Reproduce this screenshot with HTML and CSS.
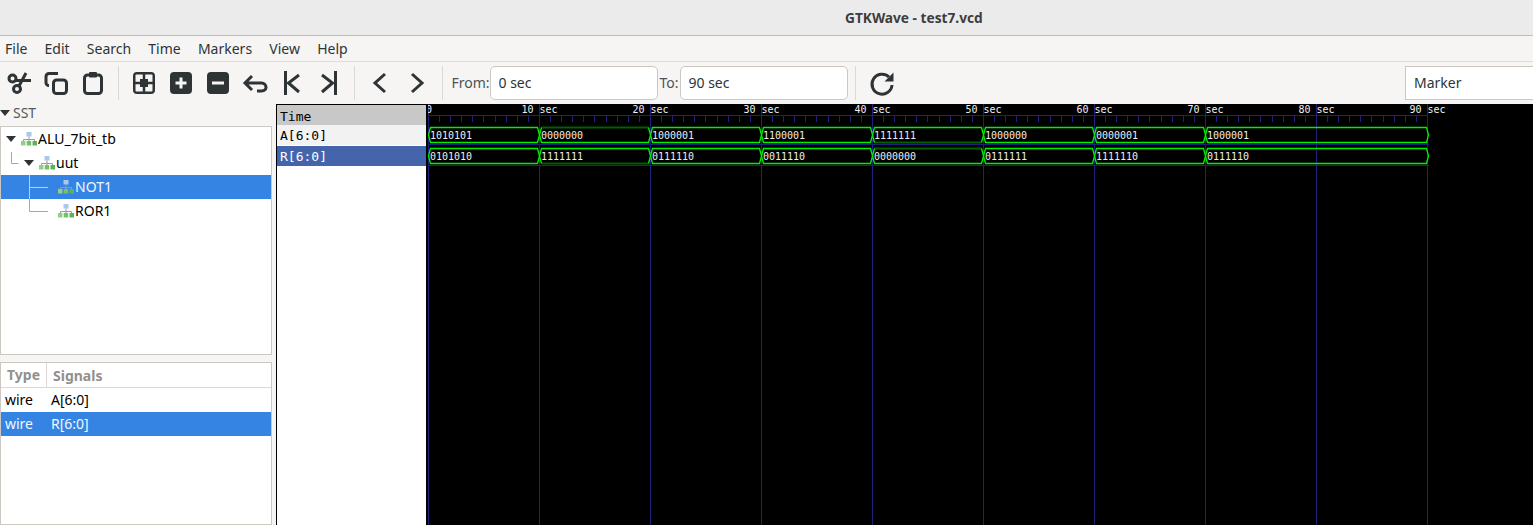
FILE: index.html
```html
<!DOCTYPE html>
<html lang="en">
<head>
    <meta charset="UTF-8">
    <title>GTKWave - test7.vcd</title>
    <link rel="stylesheet" href="styles.css">
</head>
<body>
    <svg class="defs" width="0" height="0">
        <symbol id="hier" viewBox="0 0 16 14">
            <rect x="5.5" y="0" width="5" height="4.5" fill="#a9c8ee"/>
            <path d="M8 4.5V7M2.5 7.5H13.5M2.5 7.5V9M8 7.5V9M13.5 7.5V9" stroke="#9a9a9a" fill="none"/>
            <rect x="0" y="9" width="4.5" height="4.5" fill="#8fcf86"/>
            <rect x="5.7" y="9" width="4.5" height="4.5" fill="#73c26a"/>
            <rect x="11.5" y="9" width="4.5" height="4.5" fill="#5cb552"/>
        </symbol>
    </svg>

    <header class="titlebar">GTKWave - test7.vcd</header>

    <nav class="menubar">
        <span>File</span><span>Edit</span><span>Search</span><span>Time</span><span>Markers</span><span>View</span><span>Help</span>
    </nav>

    <div class="toolbar">
        <button class="tool"><svg viewBox="0 0 24 24"><circle cx="5.5" cy="7.5" r="3.5"/><circle cx="10" cy="18" r="3.5"/><path d="M8.5 9.5H24M12 15L19 2"/></svg></button>
        <button class="tool"><svg viewBox="0 0 24 24"><rect x="9.5" y="9" width="13" height="13.5" rx="3"/><path d="M14 2.5H5A3 3 0 0 0 2 5.500V11A3 3 0 0 0 5 14.500"/></svg></button>
        <button class="tool"><svg viewBox="0 0 24 24"><rect x="3.500" y="4" width="17" height="18.500" rx="3"/><rect class="solid" x="8" y="1" width="8" height="5.500" rx="1"/></svg></button>
        <span class="sep"></span>
        <button class="tool"><svg viewBox="0 0 24 24"><rect class="solid" x="1" y="1" width="22" height="22" rx="4"/><rect class="hole" x="3.500" y="3.500" width="17" height="17" rx="1"/><rect class="solid" x="8" y="8" width="8" height="8"/><path class="arm" d="M12 3V21M3 12H21"/></svg></button>
        <button class="tool"><svg viewBox="0 0 24 24"><rect class="solid" x="1" y="1" width="22" height="22" rx="4"/><path class="cut" d="M12 6.500V17.500M6.500 12H17.500"/></svg></button>
        <button class="tool"><svg viewBox="0 0 24 24"><rect class="solid" x="1" y="1" width="22" height="22" rx="4"/><path class="cut" d="M6 12H18"/></svg></button>
        <button class="tool"><svg viewBox="0 0 24 24"><path d="M9 5L2 12L9 19M2 12H18.500C24 12 25 20 18.500 20H14"/></svg></button>
        <button class="tool"><svg viewBox="0 0 24 24"><path d="M5.500 0V24M19 4L8.500 12L19 21"/></svg></button>
        <button class="tool"><svg viewBox="0 0 24 24"><path d="M18.500 0V24M5 4L15.500 12L5 21"/></svg></button>
        <span class="sep"></span>
        <button class="tool"><svg viewBox="0 0 24 24"><path d="M17 3L7 12L17 21"/></svg></button>
        <button class="tool"><svg viewBox="0 0 24 24"><path d="M7 3L17 12L7 21"/></svg></button>
        <span class="sep"></span>
        <label class="range-label from">From:</label>
        <input class="range" type="text" value="0 sec">
        <label class="range-label to">To:</label>
        <input class="range" type="text" value="90 sec">
        <span class="sep wide"></span>
        <button class="tool"><svg viewBox="0 0 24 24"><path d="M19 6A10 10 0 1 0 22 14"/><path class="solid" d="M23.500 1.500V10.500H14.500Z"/></svg></button>
        <input class="marker" type="text" value="Marker">
    </div>

    <main class="content">
        <aside class="sidebar">
            <div class="sst-title"><span class="arrow"></span>SST</div>
            <div class="frame tree">
                <div class="row">
                    <span class="level0"></span><span class="arrow"></span>
                    <svg class="hier"><use href="#hier"/></svg><span class="label">ALU_7bit_tb</span>
                </div>
                <div class="row">
                    <svg class="lines w24"><path d="M10.500 1V12.500H17.500"/></svg><span class="arrow"></span>
                    <svg class="hier"><use href="#hier"/></svg><span class="label">uut</span>
                </div>
                <div class="row selected">
                    <svg class="lines w57"><path d="M28.500 0V24M28.500 12.500H47"/></svg>
                    <svg class="hier"><use href="#hier"/></svg><span class="label">NOT1</span>
                </div>
                <div class="row">
                    <svg class="lines w57"><path d="M28.500 0V12.500H47"/></svg>
                    <svg class="hier"><use href="#hier"/></svg><span class="label">ROR1</span>
                </div>
            </div>
            <div class="frame signals">
                <div class="signals-head"><span class="col-type">Type</span><span class="col-name">Signals</span></div>
                <div class="sig-row"><span class="cell-type">wire</span><span>A[6:0]</span></div>
                <div class="sig-row selected"><span class="cell-type">wire</span><span>R[6:0]</span></div>
            </div>
        </aside>

        <section class="wave">
            <div class="names">
                <div class="name name-time">Time</div>
                <div class="name name-a">A[6:0]</div>
                <div class="name name-r">R[6:0]</div>
            </div>
            <svg class="canvas" width="1105" height="421">
                <defs>
                    <pattern id="ticks" x="0" y="0" width="111" height="7" patternUnits="userSpaceOnUse">
                        <path d="M11.500 0V7M22.500 0V7M33.500 0V7M44.500 0V7M55.500 0V7M67.500 0V7M78.500 0V7M89.500 0V7M100.500 0V7" stroke="#20207c"/>
                    </pattern>
                    <path id="seg" d="M0.500 8L2.500 0.500H109.500L111.500 8L109.500 15.500H2.500Z"/>
                    <path id="seg-side" d="M2.500 15.500L0.500 8L2.500 0.500H109.500L111.500 8L109.500 15.500"/>
                    <path id="seg-open" d="M2.500 0.500L0.500 8L2.500 15.500H109.500L111.500 8L109.500 0.500"/>
                </defs>

                <rect x="0" y="11" width="999" height="7" fill="url(#ticks)"/>
                <path class="grid" d="M0 11.500H1000M0 40.500H1001M0 61.500H1001"/>
                <path class="grid" d="M0.500 0V421M111.500 0V421M222.500 0V421M333.500 0V421M444.500 0V421M555.500 0V421M666.500 0V421M777.500 0V421M888.500 0V421M999.500 0V421"/>

                <g class="ruler">
                    <text x="-2" y="9">0</text>
                    <text x="93.500" y="9">10 sec</text>
                    <text x="204.500" y="9">20 sec</text>
                    <text x="315.500" y="9">30 sec</text>
                    <text x="426.500" y="9">40 sec</text>
                    <text x="537.500" y="9">50 sec</text>
                    <text x="648.500" y="9">60 sec</text>
                    <text x="759.500" y="9">70 sec</text>
                    <text x="870.500" y="9">80 sec</text>
                    <text x="981.500" y="9">90 sec</text>
                </g>

                <g class="trace" transform="translate(0 23)">
                    <use href="#seg"/>
                    <path class="dim" d="M113.500 0.500H220.500"/><use href="#seg-open" x="111"/>
                    <use href="#seg" x="222"/>
                    <use href="#seg" x="333"/>
                    <path class="dim" d="M446.500 15.500H553.500"/><use href="#seg-side" x="444"/>
                    <use href="#seg" x="555"/>
                    <use href="#seg" x="666"/>
                    <path d="M777.500 8L779.500 0.500H998.500L1000.500 8L998.500 15.500H779.500Z"/>
                </g>
                <g class="trace" transform="translate(0 44)">
                    <use href="#seg"/>
                    <path class="dim" d="M113.500 15.500H220.500"/><use href="#seg-side" x="111"/>
                    <use href="#seg" x="222"/>
                    <use href="#seg" x="333"/>
                    <path class="dim" d="M446.500 0.500H553.500"/><use href="#seg-open" x="444"/>
                    <use href="#seg" x="555"/>
                    <use href="#seg" x="666"/>
                    <path d="M777.500 8L779.500 0.500H998.500L1000.500 8L998.500 15.500H779.500Z"/>
                </g>

                <g class="values">
                    <text x="2" y="35">1010101</text>
                    <text x="113" y="35">0000000</text>
                    <text x="224" y="35">1000001</text>
                    <text x="335" y="35">1100001</text>
                    <text x="446" y="35">1111111</text>
                    <text x="557" y="35">1000000</text>
                    <text x="668" y="35">0000001</text>
                    <text x="779" y="35">1000001</text>
                    <text x="2" y="56">0101010</text>
                    <text x="113" y="56">1111111</text>
                    <text x="224" y="56">0111110</text>
                    <text x="335" y="56">0011110</text>
                    <text x="446" y="56">0000000</text>
                    <text x="557" y="56">0111111</text>
                    <text x="668" y="56">1111110</text>
                    <text x="779" y="56">0111110</text>
                </g>
            </svg>
        </section>
    </main>
</body>
</html>
```

FILE: styles.css
```css
html, body {
    margin: 0;
    height: 100%;
    overflow: hidden;
}
body {
    width: 1533px;
    height: 525px;
    display: flex;
    flex-direction: column;
    font-family: 'Noto Sans', sans-serif;
    font-size: 14px;
    color: #2e3436;
    background-color: #f6f5f4;
}
.defs {
    position: absolute;
}
.titlebar {
    height: 35px;
    flex: none;
    padding-left: 845px;
    line-height: 35px;
    font-weight: 700;
    font-size: 13.7px;
    color: #3d3d3d;
    background-color: #ebebeb;
    border-bottom: 1px solid #bdbdbd;
}
.menubar {
    height: 25px;
    flex: none;
    display: flex;
    padding-left: 5px;
    gap: 17.2px;
    line-height: 25px;
    border-bottom: 1px solid #e0ddd9;
}
.toolbar {
    height: 42px;
    flex: none;
    display: flex;
    align-items: center;
    padding-left: 0.5px;
}
.tool {
    width: 37px;
    height: 34px;
    flex: none;
    padding: 0;
    border: none;
    background: none;
    display: flex;
    align-items: center;
    justify-content: center;
}
.tool svg {
    width: 24px;
    height: 24px;
    fill: none;
    stroke: #2e3436;
    stroke-width: 3;
    overflow: visible;
}
.tool .solid {
    fill: #2e3436;
    stroke: none;
}
.tool .hole {
    fill: #f6f5f4;
    stroke: none;
}
.tool .cut {
    stroke: #f6f5f4;
}
.tool .arm {
    stroke-width: 2.5;
}
.sep {
    width: 14px;
    height: 34px;
    flex: none;
    background: linear-gradient(#dcd8d4, #dcd8d4) center / 1px 100% no-repeat;
}
.sep.wide {
    width: 16px;
}
.range-label {
    flex: none;
    color: #4a5256;
    padding-bottom: 2px;
}
.range-label.from {
    width: 38px;
    padding-left: 2px;
}
.range-label.to {
    width: 20px;
    padding-left: 2px;
}
.range {
    width: 168px;
    height: 34px;
    flex: none;
    box-sizing: border-box;
    padding: 0 8px 2px;
    border: 1px solid #cdc7c2;
    border-radius: 5px;
    background-color: #fff;
    font: inherit;
    color: #2e3436;
}
.marker {
    width: 140px;
    height: 34px;
    flex: none;
    box-sizing: border-box;
    margin-left: auto;
    margin-right: -12px;
    padding: 0 8px 2px;
    border: 1px solid #cdc7c2;
    background-color: #fff;
    font: inherit;
    color: #2e3436;
}
.content {
    flex: 1;
    display: flex;
    min-height: 0;
}
.sidebar {
    width: 272px;
    flex: none;
    margin-right: 4px;
    display: flex;
    flex-direction: column;
}
.sst-title {
    height: 22px;
    box-sizing: border-box;
    padding-bottom: 5px;
    display: flex;
    align-items: center;
    gap: 3px;
    color: #55595b;
}
.arrow {
    width: 0;
    height: 0;
    flex: none;
    border-left: 5.5px solid transparent;
    border-right: 5.5px solid transparent;
    border-top: 6px solid #2e3436;
}
.frame {
    box-sizing: border-box;
    border: 1px solid #cdc7c2;
    background-color: #fff;
}
.tree {
    height: 229px;
    color: #000;
}
.row {
    height: 24px;
    display: flex;
    align-items: center;
}
.label {
    padding-bottom: 2px;
}
.row.selected, .sig-row.selected {
    background-color: #3584e4;
    color: #f2f7fd;
}
.level0 {
    width: 4.5px;
    flex: none;
}
.hier {
    width: 16px;
    height: 14px;
    flex: none;
    margin: 0 1.5px 0 5px;
}
.lines {
    height: 24px;
    flex: none;
    fill: none;
    stroke: #a8a8a8;
}
.selected .lines {
    stroke: #b4d0f3;
}
.lines.w24 {
    width: 22.5px;
}
.lines.w57 {
    width: 56.5px;
}
.lines.w57 + .hier {
    margin-left: 0;
}
.signals {
    flex: 1;
    margin-top: 7px;
    color: #000;
}
.signals-head {
    height: 24px;
    display: flex;
    align-items: center;
    font-weight: 700;
    color: #92908c;
    border-bottom: 1px solid #dcd8d4;
}
.col-type {
    width: 46px;
    padding-left: 6px;
    box-sizing: border-box;
    line-height: 24px;
    border-right: 1px solid #dcd8d4;
}
.col-name {
    padding-left: 6px;
}
.sig-row {
    height: 24px;
    display: flex;
    align-items: center;
    padding-left: 4px;
}
.sig-row span {
    padding-bottom: 2px;
}
.cell-type {
    width: 46px;
}
.wave {
    flex: 1;
    display: flex;
    align-items: flex-start;
    min-width: 0;
    height: 421px;
    background-color: #000;
}
.names {
    width: 149px;
    height: 420px;
    flex: none;
    margin: 1px 2px 0 1px;
    background-color: #fff;
    font-family: 'DejaVu Sans Mono', monospace;
    font-size: 13px;
    color: #000;
}
.name {
    height: 20px;
    line-height: 22px;
    padding-left: 3px;
}
.name-time {
    line-height: 24px;
    background-color: #c8c8c8;
}
.name-a {
    background-color: #f2f2f2;
    margin-bottom: 1px;
}
.name-r {
    background-color: #4464ac;
    color: #fff;
}
.canvas {
    flex: none;
    display: block;
    overflow: hidden;
}
.grid {
    fill: none;
    stroke: #20207c;
}
.ruler text, .values text {
    font-family: 'DejaVu Sans Mono', monospace;
    font-size: 10px;
    fill: #f0f0f0;
}
.trace {
    fill: none;
    stroke: #00f000;
    stroke-width: 1.3;
}
.trace .dim {
    stroke: #006000;
    stroke-width: 2;
}
```
